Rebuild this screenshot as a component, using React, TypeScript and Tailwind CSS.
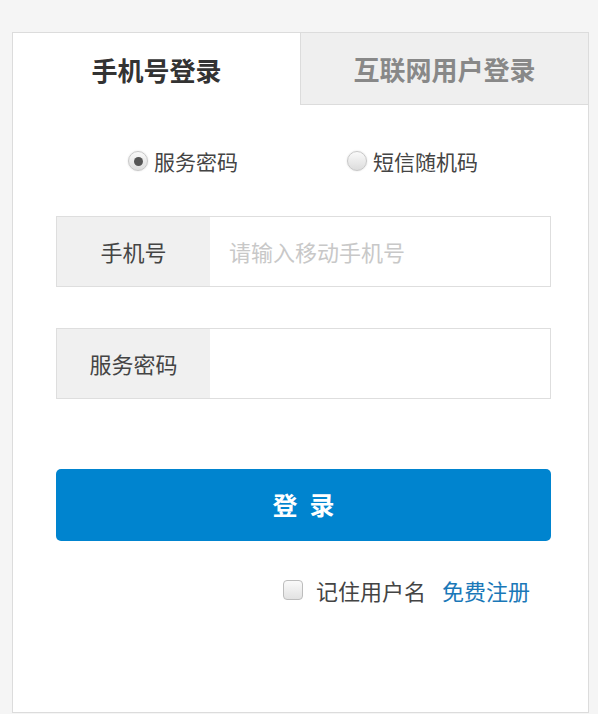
import { useState } from 'react'

const font = { fontFamily: '"Noto Sans CJK SC", "Noto Sans", sans-serif' }

function Radio({ checked, label, onClick }: { checked: boolean; label: string; onClick: () => void }) {
  return (
    <button className="flex items-center gap-[6px] cursor-pointer" onClick={onClick}>
      <span className="w-[20px] h-[20px] rounded-full border border-[#c8c8c8] bg-gradient-to-b from-[#fafafa] to-[#dcdcdc] flex items-center justify-center shadow-[0_0_2px_rgba(0,0,0,0.15)]">
        {checked && <span className="w-[9px] h-[9px] rounded-full bg-[#555]" />}
      </span>
      <span className="text-[21px] text-[#444] leading-none">{label}</span>
    </button>
  )
}

function Field({ label, placeholder }: { label: string; placeholder?: string }) {
  return (
    <div className="flex w-[495px] h-[71px] border border-[#dedede]">
      <div className="w-[153px] bg-[#f0f0f0] flex items-center justify-center text-[22px] text-[#444]">{label}</div>
      <input
        className="flex-1 min-w-0 px-[19px] text-[22px] text-[#333] placeholder:text-[#c8c8c8] outline-none bg-white"
        placeholder={placeholder}
        style={font}
      />
    </div>
  )
}

export default function App() {
  const [tab, setTab] = useState(0)
  const [mode, setMode] = useState(0)
  return (
    <div className="min-h-[714px] bg-[#f5f5f5] pt-[32px] pl-[12px]" style={font}>
      <div className="w-[577px] h-[681px] border border-[#dcdcdc] bg-white">
        <div className="flex h-[72px]">
          <button
            className={`w-[287px] text-[26px] font-bold ${tab === 0 ? 'bg-white text-[#333]' : 'bg-[#efefef] text-[#888] border-b border-[#dcdcdc]'}`}
            onClick={() => setTab(0)}
          >
            手机号登录
          </button>
          <button
            className={`flex-1 text-[26px] font-bold border-l border-[#dcdcdc] ${tab === 1 ? 'bg-white text-[#333]' : 'bg-[#efefef] text-[#888] border-b'}`}
            onClick={() => setTab(1)}
          >
            互联网用户登录
          </button>
        </div>

        <div className="flex items-center h-[24px] mt-[44px] pl-[115px] gap-[109px]">
          <Radio checked={mode === 0} label="服务密码" onClick={() => setMode(0)} />
          <Radio checked={mode === 1} label="短信随机码" onClick={() => setMode(1)} />
        </div>

        <div className="mx-[43px] mt-[43px] flex flex-col gap-[41px]">
          <Field label="手机号" placeholder="请输入移动手机号" />
          <Field label="服务密码" />
        </div>

        <button className="block mx-[43px] mt-[70px] w-[495px] h-[72px] rounded-[5px] bg-[#0084cf] text-white text-[25px] font-bold tracking-[12px] pl-[12px]">
          登录
        </button>

        <div className="flex items-center mt-[37px] pl-[270px] h-[24px] text-[22px]">
          <span className="w-[20px] h-[20px] rounded-[4px] border border-[#bdbdbd] bg-gradient-to-b from-[#fafafa] to-[#e2e2e2]" />
          <span className="ml-[13px] text-[#444]">记住用户名</span>
          <a className="ml-[16px] text-[#1a78b8] cursor-pointer">免费注册</a>
        </div>
      </div>
    </div>
  )
}
